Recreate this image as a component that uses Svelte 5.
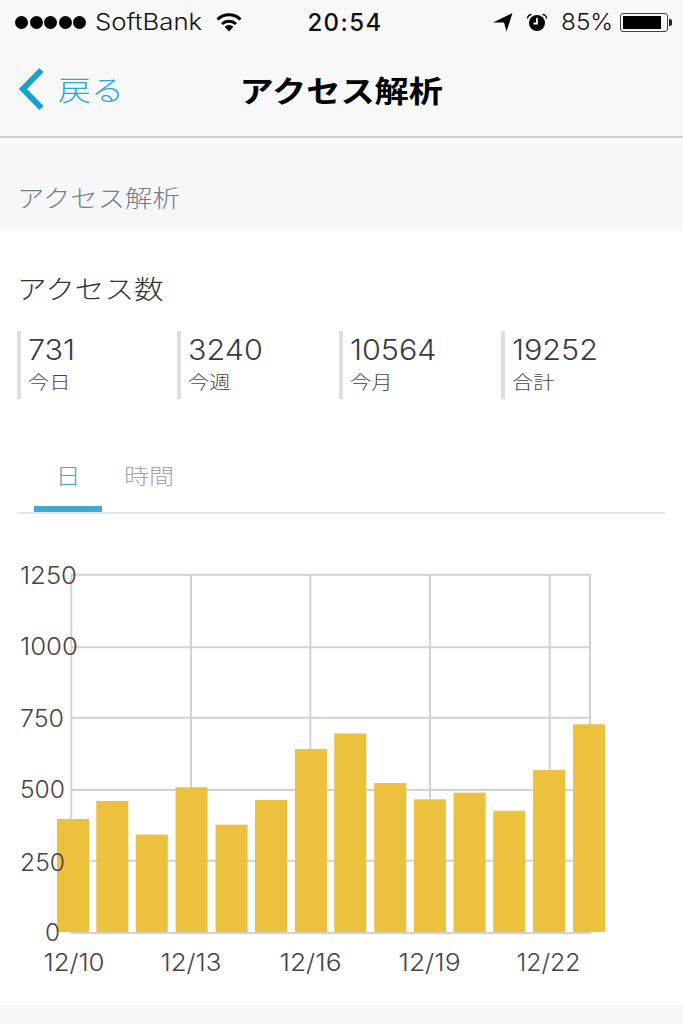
<script>
  const stats = [
    { value: '731', label: '今日' },
    { value: '3240', label: '今週' },
    { value: '10564', label: '今月' },
    { value: '19252', label: '合計' }
  ];
  const hLines = [574.7, 647.3, 717.7, 790, 860.7, 933];
  const vLines = [71.3, 191, 310.3, 430, 549.7, 590];
  const bars = [
    [57, 819], [96.3, 801], [135.8, 834.5], [175.6, 787.3], [215.6, 824.7],
    [255, 800], [295, 749], [334.3, 733.5], [374.3, 783], [414, 799.3],
    [453.6, 792.7], [493.2, 810.7], [533, 770], [573, 724.3]
  ];
  const yLabels = [
    { t: '1250', x: 20, y: 584, w: 57 },
    { t: '1000', x: 20, y: 655, w: 58 },
    { t: '750', x: 20, y: 726.7, w: 44 },
    { t: '500', x: 20, y: 798, w: 45 },
    { t: '250', x: 20, y: 870.7, w: 45 },
    { t: '0', x: 45, y: 940.7, w: 15 }
  ];
  const xLabels = [
    { t: '12/10', x: 43.5, w: 61 },
    { t: '12/13', x: 160.5, w: 61 },
    { t: '12/16', x: 279.5, w: 62 },
    { t: '12/19', x: 398.5, w: 62 },
    { t: '12/22', x: 516.5, w: 64 }
  ];
</script>

<div class="page">
  <header class="top">
    <div class="status">
      <div class="status-left">
        <div class="dots"><i></i><i></i><i></i><i></i><i></i></div>
        <span class="carrier">SoftBank</span>
        <svg class="wifi" viewBox="0 0 26 20" width="26" height="20">
          <path d="M1.5 7.5a16.5 16.5 0 0 1 23 0" fill="none" stroke="#000" stroke-width="3"/>
          <path d="M6 12a10.5 10.5 0 0 1 14 0" fill="none" stroke="#000" stroke-width="3"/>
          <path d="M13 19.5l-4.4-4.8a6.4 6.4 0 0 1 8.8 0z" fill="#000"/>
        </svg>
      </div>
      <span class="time">20:54</span>
      <div class="status-right">
        <svg class="arrow" viewBox="0 0 20 20" width="20" height="20"><path d="M0 10.5L19.5 1 13.5 19.5 11 10.5z" fill="#000"/></svg>
        <svg class="alarm" viewBox="0 0 22 20" width="22" height="20">
          <circle cx="11" cy="11" r="8" fill="#000"/>
          <path d="M11 6v5.5H7.5" fill="none" stroke="#f8f8f8" stroke-width="1.8"/>
          <path d="M1.5 6.5a4 4 0 0 1 4-4M20.500 6.500a4 4 0 0 0-4-4" fill="none" stroke="#000" stroke-width="1.5"/>
        </svg>
        <span class="pct">85%</span>
        <div class="battery"><div class="battery-fill"></div></div>
        <div class="battery-tip"></div>
      </div>
    </div>
    <nav class="nav">
      <div class="back">
        <svg viewBox="0 0 27 44" width="27" height="44"><path d="M23.500 3L5 22l18.500 19" fill="none" stroke="#14a3cf" stroke-width="6"/></svg>
        <span class="back-text">戻る</span>
      </div>
      <h1 class="title"><span>アクセス解析</span></h1>
    </nav>
  </header>

  <div class="section-head"><span>アクセス解析</span></div>

  <main class="card">
    <h2 class="card-title"><span>アクセス数</span></h2>
    <div class="stats">
      {#each stats as s}
        <div class="stat">
          <span class="num">{s.value}</span>
          <span class="lbl">{s.label}</span>
        </div>
      {/each}
    </div>
    <div class="tabs">
      <div class="tab active"><span>日</span></div>
      <div class="tab"><span>時間</span></div>
    </div>
    <svg class="chart" viewBox="0 560 683 445" width="683" height="445">
      {#each hLines as y}<line x1="71" x2="591" y1={y} y2={y} class="grid"/>{/each}
      {#each vLines as x}<line x1={x} x2={x} y1="574" y2="934" class="grid"/>{/each}
      {#each bars as b}<rect x={b[0]} y={b[1]} width="32" height={932 - b[1]} class="bar"/>{/each}
      {#each yLabels as l}<text x={l.x} y={l.y} textLength={l.w} lengthAdjust="spacingAndGlyphs" class="axis">{l.t}</text>{/each}
      {#each xLabels as l}<text x={l.x} y="970.700" textLength={l.w} lengthAdjust="spacingAndGlyphs" class="axis">{l.t}</text>{/each}
    </svg>
  </main>
</div>

<style>
  :global(body) { margin: 0; background: #f6f7f9; }
  .page {
    width: 683px;
    height: 1024px;
    overflow: hidden;
    background: #f6f7f9;
    font-family: "Liberation Sans", "Noto Sans CJK JP", sans-serif;
  }
  .top { background: #f8f8f8; border-bottom: 2px solid #d0d0d0; height: 136px; }
  .status {
    height: 44px;
    display: grid;
    grid-template-columns: 1fr auto 1fr;
    align-items: center;
    padding: 0 11px 0 15px;
    box-sizing: border-box;
  }
  .status-left, .status-right { display: flex; align-items: center; }
  .status-right { justify-content: flex-end; }
  .dots { display: flex; gap: 1.5px; }
  .dots i { width: 13px; height: 13px; border-radius: 50%; background: #000; }
  .carrier {
    font-family: Inter, "Liberation Sans", sans-serif;
    font-weight: 300;
    font-size: 23px;
    margin-left: 9px;
    width: 109px;
    color: #111;
    display: inline-block;
    white-space: nowrap;
    transform: scaleX(1.12);
    transform-origin: left;
  }
  .wifi { margin-left: 12px; }
  .time {
    font-family: Inter, "Liberation Sans", sans-serif;
    font-size: 24px;
    font-weight: 500;
    letter-spacing: 1.4px;
    color: #111;
    margin-left: 3px;
  }
  .arrow { margin-right: 13px; }
  .alarm { margin-right: 13px; }
  .pct {
    font-family: Inter, "Liberation Sans", sans-serif;
    font-weight: 300;
    font-size: 23px;
    color: #111;
    width: 59px;
    display: inline-block;
    transform: scaleX(1.06);
    transform-origin: left;
  }
  .battery {
    width: 48px;
    height: 19px;
    box-sizing: border-box;
    border: 1px solid #444;
    border-radius: 3px;
    padding: 2px;
  }
  .battery-fill { width: 38px; height: 100%; background: #000; }
  .battery-tip { width: 3px; height: 7px; background: #222; border-radius: 0 2px 2px 0; margin-left: 1px; }

  .nav {
    height: 92px;
    position: relative;
    display: flex;
    align-items: center;
    justify-content: center;
  }
  .back {
    position: absolute;
    left: 18px;
    top: 0;
    height: 90px;
    display: flex;
    align-items: center;
    gap: 13px;
  }
  .back-text {
    font-size: 28px;
    font-weight: 300;
    color: #2aa8d4;
    display: inline-block;
    transform: scaleX(1.18);
    transform-origin: left;
  }
  .title { margin: 0 0 2px; font-size: 30px; font-weight: 700; color: #000; }
  .title span, .section-head span, .card-title span, .tab span {
    display: inline-block;
    transform: scaleX(1.14);
    transform-origin: left;
  }
  .title span { transform-origin: center; }
  .section-head {
    height: 93px;
    box-sizing: border-box;
    padding: 41px 0 0 17px;
    font-size: 24px;
    font-weight: 300;
    line-height: 40px;
    color: #767d88;
  }
  .card {
    background: #fff;
    height: 774px;
    overflow: hidden;
  }
  .card-title {
    margin: 41px 0 0 17px;
    height: 59px;
    font-size: 26px;
    line-height: 36px;
    font-weight: 300;
    color: #333;
  }
  .stats {
    display: grid;
    grid-template-columns: 160px 162px 162px 160px;
    margin-left: 17px;
  }
  .stat {
    height: 68px;
    box-sizing: border-box;
    border-left: 4px solid #dedede;
    padding-left: 7px;
    display: flex;
    flex-direction: column;
    align-items: flex-start;
  }
  .num {
    font-family: Inter, "Liberation Sans", sans-serif;
    font-weight: 300;
    font-size: 28px;
    line-height: 38px;
    color: #3a3a40;
    display: inline-block;
    transform: scaleX(1.09);
    transform-origin: left;
  }
  .lbl {
    font-size: 18px;
    font-weight: 300;
    line-height: 28px;
    color: #444;
    display: inline-block;
    transform: scaleX(1.18);
    transform-origin: left;
  }
  .tabs {
    display: flex;
    margin: 47px 18px 0 17px;
    padding-left: 17px;
    height: 66px;
    border-bottom: 2px solid #e3e6e9;
  }
  .tab {
    width: 68px;
    height: 66px;
    box-sizing: border-box;
    text-align: center;
    font-size: 22px;
    font-weight: 300;
    line-height: 62px;
    color: #a0a9af;
  }
  .tab span { transform-origin: center; }
  .tab:last-child { margin-left: 4px; width: 86px; }
  .tab.active { color: #3fa8d4; border-bottom: 6px solid #3fa9d0; }
  .chart { display: block; margin-top: 46px; }
  .grid { stroke: #d2d2d4; stroke-width: 2; }
  .bar { fill: #ebc13e; }
  .axis { font-size: 24px; font-weight: 300; fill: #444; font-family: Inter, "Liberation Sans", sans-serif; }
</style>
